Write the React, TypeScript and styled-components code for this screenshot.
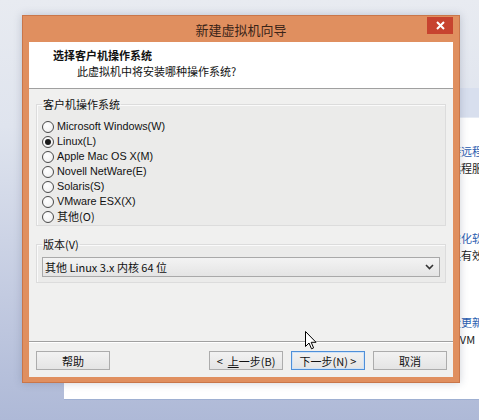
import React, { useState } from 'react';
import styled, { createGlobalStyle } from 'styled-components';

const GlobalStyle = createGlobalStyle`
  html, body {
    margin: 0;
    padding: 0;
  }
  body {
    font-family: "Liberation Sans", "Noto Sans CJK SC", sans-serif;
    background: #c8d0e4;
  }
`;

const CJK = `"Noto Sans CJK SC", "Liberation Sans", sans-serif`;
const LATIN = `"Liberation Sans", "Noto Sans CJK SC", sans-serif`;

const osList = [
    { key: 'win', label: 'Microsoft Windows(W)' },
    { key: 'linux', label: 'Linux(L)' },
    { key: 'mac', label: 'Apple Mac OS X(M)' },
    { key: 'novell', label: 'Novell NetWare(E)' },
    { key: 'solaris', label: 'Solaris(S)' },
    { key: 'esx', label: 'VMware ESX(X)' },
    { key: 'other', label: '其他(O)' },
];

// text of the window sitting behind the wizard, mostly hidden by it
const backLines = [
    { text: '接远程', link: true, gap: 0 },
    { text: '远程服', link: false, gap: 0 },
    { text: '虚化软', link: true, gap: 53 },
    { text: '具有效', link: false, gap: 0 },
    { text: '检更新', link: true, gap: 50 },
    { text: '    VM', link: false, gap: 0 },
];

const App: React.FC = () => {
    const [os, setOs] = useState('linux');

    return (
        <>
            <GlobalStyle />
            <Desktop>
                <BackWindow>
                    <BackHeader />
                    <BackText>
                        {backLines.map((l, i) => (
                            <BackLine key={i} $link={l.link} $gap={l.gap}>{l.text}</BackLine>
                        ))}
                    </BackText>
                </BackWindow>

                <Dialog>
                    <TitleBar>
                        <Title>新建虚拟机向导</Title>
                        <CloseButton>
                            <svg width="9" height="9" viewBox="0 0 9 9">
                                <path d="M1 1 L8 8 M8 1 L1 8" stroke="#fff" strokeWidth="2" />
                            </svg>
                        </CloseButton>
                    </TitleBar>

                    <Content>
                        <Header>
                            <HeaderTitle>选择客户机操作系统</HeaderTitle>
                            <HeaderSub>此虚拟机中将安装哪种操作系统?</HeaderSub>
                        </Header>

                        <Body>
                            <GroupBox $height={129}>
                                <Legend>客户机操作系统</Legend>
                                <RadioList>
                                    {osList.map(o => (
                                        <RadioRow key={o.key} onClick={() => setOs(o.key)}>
                                            <RadioCircle $checked={os === o.key} />
                                            <RadioLabel $cjk={o.key === 'other'}>{o.label}</RadioLabel>
                                        </RadioRow>
                                    ))}
                                </RadioList>
                            </GroupBox>

                            <GroupBox $height={46}>
                                <Legend>版本(V)</Legend>
                                <Select>
                                    <span>其他 Linux 3.x 内核 64 位</span>
                                    <svg width="9" height="6" viewBox="0 0 9 6">
                                        <path d="M1 1 L4.5 4.5 L8 1" stroke="#333" strokeWidth="1.6" fill="none" />
                                    </svg>
                                </Select>
                            </GroupBox>
                        </Body>

                        <Footer>
                            <Button>帮助</Button>
                            <NavButtons>
                                <Button><span>&lt;&nbsp; <u>上</u>一步(B)</span></Button>
                                <Button $focused><span>下一步(N) &gt;</span></Button>
                                <Button>取消</Button>
                            </NavButtons>
                        </Footer>
                    </Content>
                </Dialog>

                <Cursor width="12" height="19" viewBox="0 0 12 19">
                    <path d="M0.5 0.5 L0.5 15.5 L4 12 L6.5 17.8 L8.6 16.9 L6.2 11.3 L11 11.3 Z" fill="#fff" stroke="#000" strokeWidth="1" />
                </Cursor>
            </Desktop>
        </>
    );
};

const Desktop = styled.div`
  position: relative;
  width: 479px;
  height: 420px;
  overflow: hidden;
  background: linear-gradient(180deg, #e8ebf1 0%, #dfe4ee 30%, #c3cbe1 70%, #aeb9d7 100%);
`;

const BackWindow = styled.div`
  position: absolute;
  left: 64px;
  top: 88px;
  width: 440px;
  height: 311px;
  background: #fff;
  border-bottom: 1px solid #9fb0d2;
  display: flex;
  flex-direction: column;
`;

const BackHeader = styled.div`
  height: 29px;
  background: #d8dfee;
  border-bottom: 1px solid #e6ebf4;
`;

const BackText = styled.div`
  display: flex;
  flex-direction: column;
  padding: 25px 0 0 386px;
  font-family: ${CJK};
  font-size: 11px;
  line-height: 17px;
  white-space: pre;
`;

const BackLine = styled.div<{ $link: boolean; $gap: number }>`
  color: ${p => (p.$link ? '#2a5db0' : '#1a1a1a')};
  margin-top: ${p => p.$gap}px;
`;

const Dialog = styled.div`
  position: absolute;
  left: 22px;
  top: 15px;
  width: 438px;
  height: 368px;
  box-sizing: border-box;
  background: #e08f5f;
  border: 1px solid #c9764a;
  padding: 0 6px 5px 6px;
  display: flex;
  flex-direction: column;
  box-shadow: 0 0 8px rgba(60, 70, 100, 0.25);
`;

const TitleBar = styled.div`
  position: relative;
  height: 26px;
  display: flex;
  align-items: center;
  justify-content: center;
`;

const Title = styled.div`
  font-family: ${CJK};
  font-size: 13px;
  color: #3a2418;
`;

const CloseButton = styled.div`
  position: absolute;
  right: 0;
  top: 1px;
  width: 26px;
  height: 17px;
  background: #c7432f;
  display: flex;
  align-items: center;
  justify-content: center;
`;

const Content = styled.div`
  flex: 1;
  background: #f0f0ef;
  display: flex;
  flex-direction: column;
`;

const Header = styled.div`
  height: 47px;
  background: #fff;
  border-bottom: 1px solid #a0a0a0;
  display: flex;
  flex-direction: column;
  padding: 5px 0 0 24px;
  box-sizing: border-box;
  font-family: ${CJK};
  font-size: 11px;
  color: #111;
`;

const HeaderTitle = styled.div`
  font-weight: 700;
  line-height: 16px;
`;

const HeaderSub = styled.div`
  padding-left: 24px;
  line-height: 16px;
`;

const Body = styled.div`
  flex: 1;
  display: flex;
  flex-direction: column;
  gap: 11px;
  padding: 8px 7px 0 7px;
`;

const GroupBox = styled.fieldset<{ $height: number }>`
  margin: 0;
  padding: 0 5px;
  height: ${p => p.$height}px;
  box-sizing: border-box;
  border: 1px solid #dcdcdc;
  box-shadow: inset 1px 1px 0 #fafafa;
  background: #ebebea;
  min-width: 0;
`;

const Legend = styled.legend`
  font-family: ${CJK};
  font-size: 11px;
  color: #111;
  padding: 0 1px;
  margin-left: 0;
  line-height: 14px;
`;

const RadioList = styled.div`
  display: flex;
  flex-direction: column;
  padding-top: 8px;
`;

const RadioRow = styled.label`
  display: flex;
  align-items: center;
  gap: 3px;
  height: 15px;
  cursor: default;
`;

const RadioCircle = styled.span<{ $checked: boolean }>`
  width: 12px;
  height: 12px;
  box-sizing: border-box;
  border-radius: 50%;
  border: 1px solid #4a4a4a;
  background: radial-gradient(circle at 40% 35%, #ffffff 0%, #f4f4f4 60%, #e2e2e2 100%);
  display: flex;
  align-items: center;
  justify-content: center;

  &::after {
    content: '';
    width: 6px;
    height: 6px;
    border-radius: 50%;
    background: #1a1a1a;
    display: ${p => (p.$checked ? 'block' : 'none')};
  }
`;

const RadioLabel = styled.span<{ $cjk: boolean }>`
  font-family: ${p => (p.$cjk ? CJK : LATIN)};
  font-size: ${p => (p.$cjk ? 11 : 10.8)}px;
  color: #111;
  line-height: 15px;
`;

const Select = styled.div`
  margin-top: 6px;
  height: 20px;
  box-sizing: border-box;
  border: 1px solid #a9a9a9;
  background: linear-gradient(180deg, #f3f3f3 0%, #e4e4e4 100%);
  display: flex;
  align-items: center;
  justify-content: space-between;
  padding: 0 5px 0 2px;
  font-family: ${CJK};
  font-size: 11px;
  color: #111;
`;

const Footer = styled.div`
  height: 36px;
  border-top: 1px solid #a0a0a0;
  box-shadow: inset 0 1px 0 #fff;
  display: flex;
  align-items: flex-start;
  justify-content: space-between;
  padding: 9px 6px 0 7px;
  box-sizing: border-box;
`;

const NavButtons = styled.div`
  display: flex;
  gap: 8px;
`;

const Button = styled.button<{ $focused?: boolean }>`
  width: 74px;
  height: 19px;
  padding: 0;
  box-sizing: border-box;
  border: 1px solid ${p => (p.$focused ? '#4f8fd8' : '#acacac')};
  box-shadow: ${p => (p.$focused ? 'inset 0 0 0 1px #cfe3f8' : 'none')};
  background: linear-gradient(180deg, #f2f2f2 0%, #e4e4e4 100%);
  font-family: ${CJK};
  font-size: 11px;
  color: #111;
  display: flex;
  align-items: center;
  justify-content: center;
  white-space: pre;

  u {
    text-underline-offset: 1px;
  }
`;

const Cursor = styled.svg`
  position: absolute;
  left: 305px;
  top: 331px;
`;

export default App;
